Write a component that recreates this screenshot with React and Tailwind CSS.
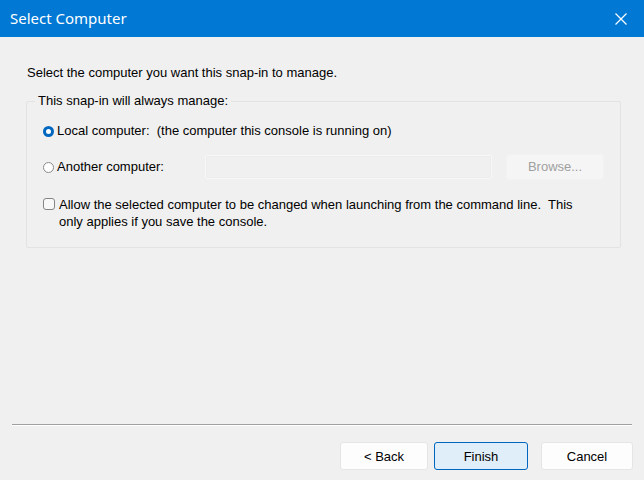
import React from "react";

export default function App() {
  return (
    <div className="w-[644px] h-[480px] bg-[#f0f0f0] flex flex-col overflow-hidden" style={{ fontFamily: '"Liberation Sans", Arial, sans-serif' }}>
      <div className="h-[37px] bg-[#0078d4] flex items-center justify-between pl-[10px] pr-[17px] shrink-0">
        <span className="text-white text-[15px]" style={{ fontFamily: '"Noto Sans", "Open Sans", sans-serif' }}>Select Computer</span>
        <svg width="12" height="12" viewBox="0 0 12 12" className="text-white">
          <path d="M0.5 0.5 L11.5 11.5 M11.5 0.5 L0.5 11.5" stroke="currentColor" strokeWidth="1.2" fill="none" />
        </svg>
      </div>
      <div className="flex-1 flex flex-col">
        <div className="pl-[27px] pt-[28px] text-[13px] text-black leading-[16px]">Select the computer you want this snap-in to manage.</div>
        <div className="ml-[26px] mr-[23px] mt-[20px] border border-[#e3e3e3] rounded-[2px] h-[147px] relative">
          <span className="absolute left-[8px] top-[-9px] bg-[#f0f0f0] px-[3px] text-[13px] leading-[16px] text-black">This snap-in will always manage:</span>
          <div className="pl-[16px] pt-[21px] flex flex-col text-[13px] text-black leading-[16px]">
            <div className="flex items-center h-[16px]">
              <span className="w-[11px] h-[11px] rounded-full bg-[#0067c0] flex items-center justify-center">
                <span className="w-[5px] h-[5px] rounded-full bg-white"></span>
              </span>
              <span className="ml-[3px]">Local computer:&nbsp; (the computer this console is running on)</span>
            </div>
            <div className="flex items-center mt-[15px] h-[26px]">
              <span className="w-[11px] h-[11px] rounded-full border border-[#8a8a8a] bg-white"></span>
              <span className="ml-[3px] w-[148px]">Another computer:</span>
              <div className="w-[287px] h-[24px] border border-[#f8f8f8] bg-[#f0f0f0] rounded-[2px] shadow-[inset_0_0_0_1px_#ececec]"></div>
              <div className="ml-[14px] w-[98px] h-[26px] bg-[#f5f5f5] rounded-[3px] border border-[#f2f2f2] flex items-center justify-center text-[#a0a0a0]">Browse...</div>
            </div>
            <div className="flex items-start mt-[16px]">
              <span className="w-[12px] h-[12px] mt-[2px] rounded-[3px] border border-[#858585] bg-[#f8f8f8] shrink-0"></span>
              <span className="ml-[4px] leading-[17px]">Allow the selected computer to be changed when launching from the command line.&nbsp; This<br />only applies if you save the console.</span>
            </div>
          </div>
        </div>
        <div className="flex-1"></div>
        <div className="mx-[12px] h-[2px] border-t border-[#a0a0a0] border-b border-b-white"></div>
        <div className="flex justify-end pr-[11px] pt-[16px] pb-[10px] text-[13px] text-black">
          <div className="w-[88px] h-[28px] pt-[2px] bg-[#fdfdfd] border border-[#e5e5e5] rounded-[3px] flex items-center justify-center">&lt; Back</div>
          <div className="ml-[6px] w-[94px] h-[28px] pt-[2px] bg-[#e0eef9] border border-[#0067c0] rounded-[3px] flex items-center justify-center">Finish</div>
          <div className="ml-[13px] w-[92px] h-[28px] pt-[2px] bg-[#fdfdfd] border border-[#e5e5e5] rounded-[3px] flex items-center justify-center">Cancel</div>
        </div>
      </div>
    </div>
  );
}
